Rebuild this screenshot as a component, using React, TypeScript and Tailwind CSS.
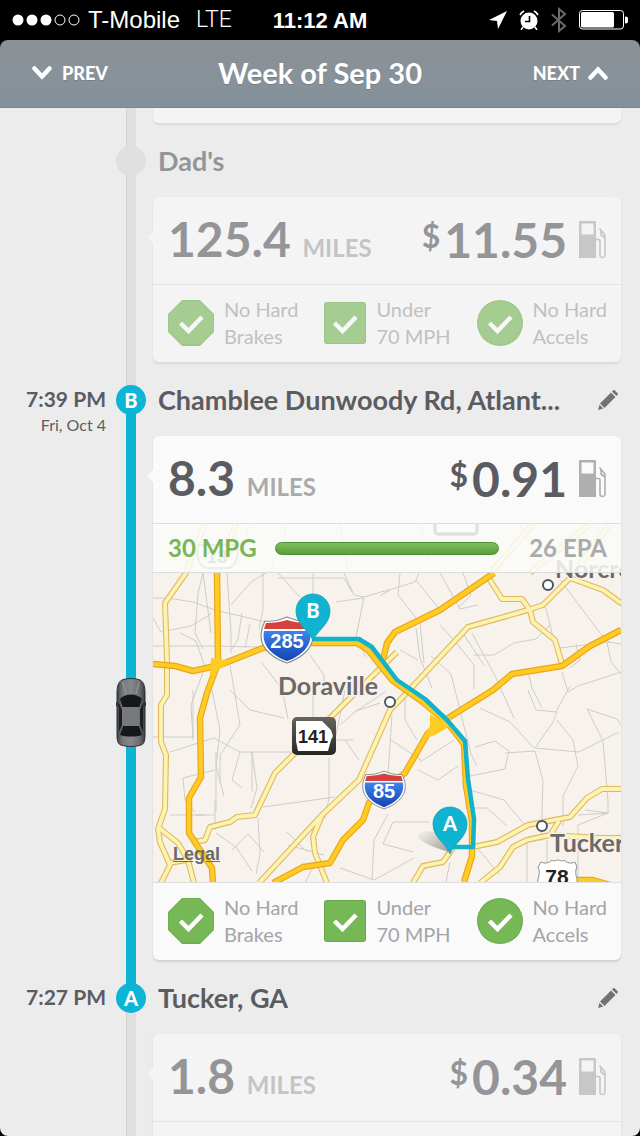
import React from 'react'

const inactive = 'bg-[#e0e0e0] border-l border-[#d2d2d2]'
const active = 'bg-[#0cb4d6]'

function StatusBar() {
  return (
    <div className="grid h-10 grid-cols-[1fr_auto_1fr] items-center bg-black px-3 font-['Liberation_Sans',sans-serif] text-[22px] text-white">
      <div className="flex items-center gap-2">
        <svg width="68" height="14" viewBox="0 0 68 14" aria-label="Signal">
          <g fill="#fff">
            <circle cx="6" cy="7" r="5.5" />
            <circle cx="20" cy="7" r="5.5" />
            <circle cx="34" cy="7" r="5.5" />
          </g>
          <g fill="none" stroke="#fff">
            <circle cx="48" cy="7" r="5" />
            <circle cx="62" cy="7" r="5" />
          </g>
        </svg>
        <span className="text-2xl">T-Mobile</span>
        <span className="ml-2 font-['Roboto',sans-serif] text-[23px] font-light">LTE</span>
      </div>
      <span className="font-bold">11:12 AM</span>
      <div className="flex items-center justify-end gap-3">
        <svg width="18" height="18" viewBox="0 0 18 18" fill="#fff">
          <path d="M18 0 0 9l8 1 1 8z" />
        </svg>
        <svg width="20" height="20" viewBox="0 0 20 20">
          <circle cx="10" cy="11" r="8.5" fill="#fff" />
          <path d="M1 5a10 10 0 0 1 4-4M19 5a10 10 0 0 0-4-4" stroke="#fff" strokeWidth="1.6" fill="none" />
          <path d="M10.500 6v5.500H6" stroke="#000" strokeWidth="1.600" fill="none" />
          <path d="m4 17-2 3M16 17l2 3" stroke="#fff" strokeWidth="1.500" />
        </svg>
        <svg width="16" height="26" viewBox="0 0 16 26" fill="none" stroke="#6b6b6b" strokeWidth="2">
          <path d="M1 7.500 14 19l-6 5V2l6 5L1 18.500" />
        </svg>
        <svg width="49" height="20" viewBox="0 0 49 20">
          <rect x="0.500" y="0.500" width="44" height="18.500" rx="3" fill="none" stroke="#fff" />
          <rect x="2" y="2" width="33" height="15.500" rx="1.500" fill="#fff" />
          <path d="M46 6.500a3.500 3.500 0 0 1 0 7z" fill="#fff" />
        </svg>
      </div>
    </div>
  )
}

function Header() {
  return (
    <header className="bg-black">
      <div className="grid h-[68px] grid-cols-[1fr_auto_1fr] items-center rounded-t-lg border-b border-[#7c858b] bg-linear-to-b from-[#8b9297] to-[#84919a] px-8 pb-0.5 text-white">
        <button className="flex items-center gap-2.5 justify-self-start text-lg font-black text-shadow-2xs">
          <svg width="20" height="14" viewBox="0 0 20 14" fill="none" stroke="#fff" strokeWidth="4.500" strokeLinecap="round" strokeLinejoin="miter">
            <path d="m2.500 2.500 7.500 8 7.500-8" />
          </svg>
          PREV
        </button>
        <h1 className="text-[29px] font-bold text-shadow-2xs">Week of Sep 30</h1>
        <button className="flex items-center gap-2 justify-self-end text-lg font-black text-shadow-2xs">
          NEXT
          <svg width="20" height="14" viewBox="0 0 20 14" fill="none" stroke="#fff" strokeWidth="4.500" strokeLinecap="round" strokeLinejoin="miter">
            <path d="m2.500 11.500 7.500-8 7.500 8" />
          </svg>
        </button>
      </div>
    </header>
  )
}

function PumpIcon() {
  return (
    <svg width="28" height="38" viewBox="0 0 28 38">
      <path fillRule="evenodd" fill="#aeafb1" d="M1 0h15a1 1 0 0 1 1 1v36H0V1a1 1 0 0 1 1-1zM2.500 2.500v11h12v-11z" />
      <path d="M17 18.500h2.500a1.500 1.500 0 0 1 1.500 1.500v14a2.500 2.500 0 0 0 5 0V14l-5.500-6.500M22 9v5l4 3" fill="none" stroke="#aeafb1" strokeWidth="1.600" />
    </svg>
  )
}

function PencilIcon() {
  return (
    <svg width="20" height="20" viewBox="0 0 20 20" fill="#717274">
      <path d="m14 1.500 1.200-1.200a1 1 0 0 1 1.400 0l3 3a1 1 0 0 1 0 1.400L18.500 6z" />
      <path d="m13 2.500 4.500 4.500L6.500 18 2 13.500z" />
      <path d="m1.500 14.700 3.800 3.800L0 20z" />
    </svg>
  )
}

type Shape = 'octagon' | 'square' | 'circle'

function Badge({ shape }: { shape: Shape }) {
  return (
    <svg width={shape === 'square' ? 42 : 46} height="46" viewBox={shape === 'square' ? '2 0 42 46' : '0 0 46 46'}>
      {shape === 'octagon' && <path d="M14 0h18l14 14v18L32 46H14L0 32V14z" fill="#6fb04c" />}
      {shape === 'octagon' && <path d="M14 1h18l13 13v17L32 44H14L1 31V14z" fill="#76b855" />}
      {shape === 'square' && <rect x="2" y="2" width="42" height="42" rx="3" fill="#6aa948" />}
      {shape === 'square' && <rect x="3" y="3" width="40" height="40" rx="2" fill="#76b855" />}
      {shape === 'circle' && <circle cx="23" cy="23" r="23" fill="#6aa948" />}
      {shape === 'circle' && <circle cx="23" cy="23" r="22" fill="#76b855" />}
      <path d="m12.500 23 8 8L34 17" fill="none" stroke="#fff" strokeWidth="4.500" />
    </svg>
  )
}

const checks: { shape: Shape; top: string; bottom: string }[] = [
  { shape: 'octagon', top: 'No Hard', bottom: 'Brakes' },
  { shape: 'square', top: 'Under', bottom: '70 MPH' },
  { shape: 'circle', top: 'No Hard', bottom: 'Accels' },
]

function Checks() {
  return (
    <ul className="flex h-[77px] items-center justify-between pr-3.5 pb-0.5 pl-[15px]">
      {checks.map((c) => (
        <li key={c.shape} className="flex items-center gap-2.5 text-xl leading-[27px] text-[#a3a4a7]">
          <Badge shape={c.shape} />
          <span>
            {c.top}
            <br />
            {c.bottom}
          </span>
        </li>
      ))}
    </ul>
  )
}

const streets = [
  'M153 598h15l25 4 22 8 34 8 20 5 14 9M153 646h60l45 1M203 573l-5 20-3 40 8 16M203 573l8 60M227 573l4 60v20M231 605l20-23 20-12 2-10M263 573v36l-4 20M278 578h66l8 14M278 573l20 22 18 14M313 573v20l-6 14M344 573l10 22 10 2 20-6M380 596l10-6M364 597l-8 40 10 20',
  'M336 602l27-4M153 618l8 14 30-6 20-12M180 633l16 8 9 26-14 38 2 33M242 613l-4 26-6 10M250 624l-5 24M262 663l20 26 6 30M310 655l14 20v20M230 665l10 60-20 30v28M212 690l8 40-4 36 8 30M153 737h40M193 690v50M170 752l44-14 26 14h38M252 752v40M216 752v60M278 752h35v-62M240 752l-8 28 10 8M230 690l20 20 34 8M252 752l5 36-6 20M263 807l72-10M329 758v40l-4 20M335 740h18M183 778l32-8M183 778l2 22 10 12M215 800v30M195 815h20M258 818l2 36-4 20M170 815h35',
  'M216 833l20 14 16 24M232 850l16-16 16 18M287 832l20 20M288 845l36 10M305 883l10-20M340 868l34 12 40-22M372 880l2-40 14-26M388 775l4-60M345 740l14 20M345 690l-10 50M355 712l30-20M340 725l16-14 24-8',
  'M382 592l33-10 4-9M400 573l-2 22 22 28 4 40M416 580l24 30M440 573l20 36 18-4M463 573l8 22-12 12M416 628l4 30 12 30M400 650l18 10M431 656l20 18 20 80 6 12M440 625l18 20 16 20v24M472 633l24 45 18 40M464 635l20 30M474 655h20l20-12 22-4 14-14M545 605l10 40M555 573l45 60 10 10M560 648l48-6 13 2M570 668l10-8-4-16M607 642l4 20 10 12M528 672l4 16 10 20M562 672l6 20 10-6 43-14',
  'M480 708l30 14 24 26M528 690l8 20 20 2 14-26M557 712l-4 10-18 26M557 720l16 20 5 26-15 30v30M587 709l30 10 4 6M587 709l16 32 5 60v12M535 748l44 4 40-20M505 753l30-2 8 30-2 60M475 747l20-6 14 10-4 18-40 8M420 762l34-22M418 770l20 10 20-14M421 760l-30-20M405 690v30l12 20M470 790l34 10 20 24M465 808h22l20 18M393 822h36M393 822l-10 22 30 8M527 840v43M479 850l20 24M450 862l-4 20M578 815l30-2-30 12v58M547 840v43M585 810l24 3',
  'M285 524v40M340 524l8 48M420 524l10 40M520 524l20 40M600 524l-20 40M250 524l-12 40',
]

const lightRoads = [
  'M205 524l-19 49-21 30 2 57v35l-6 10v37l5 13-1 54-7 20 2 13 10 23-10 20',
  'M158 827l20 16 10 17 6 23M170 863l16-3',
  'M397 652l-44 43-78 78-20 42-18 2-7 5-20 5-5 13-10 2',
  'M640 612l-19-9-18-13-33-12-27 27-15 5-60 17-68 73-10 10-31 70-37 35-63 68',
  'M322 815l-9 22 2 16 12 30',
  'M488 577l14 22h20l8 11 3 12 22 18 7 24',
  'M473 847l24-5 31-17 42-8 17-19 15-9h19',
  'M480 883l20-16 13-20 14-7 23-5 9-14M550 835l50 3h21',
  'M413 883l10-17 20-4 10-14',
  'M493 570l40-46M530 573l60-49M570 578l40-54M236 524l-19 49',
]

const highways = [
  'M217 573l1 90-11 30-7 25 1 59-12 21v35l11 17 12 18 1 15',
  'M153 664l22 2 18 5 27-6 43-17 24-5h70l11 7 24 30 28 20 27 22 17 22 2 42 6 36v34l-8 26',
  'M273 883l30-16 27-4 13-23 20-20 6-17 14-13 22-17 23-40 20-15 45-28 19-16 50-8 28-20 31-16',
  'M383 660l4-17 8-11 45-22 54-37',
  'M577 880h16l17 5',
]

function Shield({ x, y, scale, label }: { x: number; y: number; scale: number; label: string }) {
  return (
    <g transform={`translate(${x} ${y})`}>
      <g transform={`scale(${scale})`}>
        <path d="M-22-19c8 1 15-1 22-4 7 3 14 5 22 4 3 6 4 10 4 15C26 10 12 19 0 23c-12-4-26-13-26-27 0-5 1-9 4-15z" fill="#fff" stroke="#8d8d90" strokeWidth="1.200" />
        <path d="M-21-17c8 0 15-1 21-3 6 2 13 3 21 3l2 6h-46z" fill="#d5403c" />
        <path d="M-23-9h46c3 15-9 25-23 30-14-5-26-15-23-30z" fill="url(#shieldBlue)" />
      </g>
      <text y="8" textAnchor="middle" fill="#fff" fontFamily="Liberation Sans, sans-serif" fontWeight="700" fontSize="20">{label}</text>
    </g>
  )
}

function Pin({ x, y, label }: { x: number; y: number; label: string }) {
  return (
    <g transform={`translate(${x} ${y})`}>
      <path d="M0 30C-3 20-17 14-17 0a17 17 0 0 1 34 0c0 14-14 20-17 30z" fill="#10b4d0" stroke="#0ca3bd" strokeWidth="0.800" />
      <text y="7" textAnchor="middle" fill="#fff" fontFamily="Lato, sans-serif" fontWeight="900" fontSize="20">{label}</text>
    </g>
  )
}

function RouteMap() {
  return (
    <div className="relative border-b border-[#dfdfe0]">
      <svg viewBox="153 524 468 358" preserveAspectRatio="xMidYMid slice" className="block h-[358px] w-full bg-[#f7f3ec]">
        <defs>
          <linearGradient id="shieldBlue" x1="0" y1="0" x2="0" y2="1">
            <stop offset="0" stopColor="#3f83ea" />
            <stop offset="1" stopColor="#1243b0" />
          </linearGradient>
          <linearGradient id="plate" x1="0" y1="0" x2="0" y2="1">
            <stop offset="0" stopColor="#66665f" />
            <stop offset="1" stopColor="#262622" />
          </linearGradient>
          <linearGradient id="pinShadow" x1="0" y1="0" x2="1" y2="1">
            <stop offset="0" stopColor="#000" stopOpacity="0" />
            <stop offset="1" stopColor="#000" stopOpacity="0.350" />
          </linearGradient>
        </defs>
        <g fill="none" stroke="#cfccc8" strokeWidth="1">
          {streets.map((d) => <path key={d} d={d} />)}
        </g>
        <g fill="none" strokeLinejoin="round">
          <g stroke="#dfb962" strokeWidth="6">
            {lightRoads.map((d) => <path key={d} d={d} />)}
          </g>
          <g stroke="#fdf3b0" strokeWidth="3.800">
            {lightRoads.map((d) => <path key={d} d={d} />)}
          </g>
          <g stroke="#eba51c" strokeWidth="6.500">
            {highways.map((d) => <path key={d} d={d} />)}
          </g>
          <g stroke="#fdcb22" strokeWidth="4.200">
            {highways.map((d) => <path key={d} d={d} />)}
          </g>
          <path d="M422 740l8-14v-12l10 6 12-3-5 11-12 7z" fill="#fdcb22" />
          <path d="M211 658l14 2 3 4-10 6-8 6z" fill="#fdcb22" />
          <path d="M313 639h46l13 8 25 33 28 19 22 21 18 21 3 38 6 40-1 28h-23" stroke="#12b2cb" strokeWidth="4.500" />
        </g>

        <g fill="#fff" stroke="#4a5568" strokeWidth="2">
          <circle cx="390" cy="702" r="5" />
          <circle cx="548" cy="585" r="5" />
          <circle cx="542" cy="826" r="5" />
        </g>
        <g fontFamily="Lato, sans-serif" fontWeight="700" fontSize="25" fill="#6c6a69" stroke="#f7f3ec" strokeWidth="3" paintOrder="stroke">
          <text x="278" y="695">Doraville</text>
          <text x="555" y="578">Norcross</text>
          <text x="550" y="852">Tucker</text>
        </g>

        <Shield x={287} y={640} scale={1} label="285" />
        <Shield x={384} y={790} scale={0.82} label="85" />

        <g>
          <rect x="292" y="717" width="44" height="38" rx="5" fill="url(#plate)" />
          <path d="M296 721h26l9 9 2 6-2 4-3 11h-30l-2-10z" fill="#fff" />
          <text x="313" y="743" textAnchor="middle" fontFamily="Liberation Sans, sans-serif" fontWeight="700" fontSize="18" fill="#222">141</text>
        </g>
        <g>
          <path d="M541 862c4 2 8 1 11-2 2 2 4 0 6 0s4 2 6 0c3 3 7 4 11 2l2 5c-4 8 3 12-1 22h-37c-4-10 3-14-1-22z" fill="#fff" stroke="#8d8d90" />
          <text x="557" y="884" textAnchor="middle" fontFamily="Liberation Sans, sans-serif" fontWeight="700" fontSize="21" fill="#222">78</text>
        </g>
        <g fill="#fff" stroke="#9c9ca0" strokeWidth="2">
          <path d="M199 545c-4 8 0 22 8 23h21c8-1 12-15 8-23z" />
          <path d="M435 515v16a3 3 0 0 0 3 3h36a3 3 0 0 0 3-3v-16z" stroke="#55555a" strokeWidth="3.500" />
          <text x="217" y="563" textAnchor="middle" fontFamily="Liberation Sans, sans-serif" fontWeight="700" fontSize="19" fill="#77777a" stroke="none">13</text>
        </g>

        <path d="M449 852c-14-4-32-11-31-17 2-6 18-5 24 2z" fill="url(#pinShadow)" />
        <Pin x={313} y={611} label="B" />
        <Pin x={450} y={824} label="A" />
      </svg>

      <div className="absolute inset-x-0 top-0 flex h-[49px] items-center border-b border-[#dcdcdc] bg-[#fafaf9]/85 pr-3.5 pl-[15px] text-2xl font-bold">
        <span className="text-[#78b655]">30 MPG</span>
        <div role="img" aria-label="30 of 26 miles per gallon" className="mr-[30px] ml-[18px] h-[13px] flex-1 rounded-full border border-[#4f8f33] bg-linear-to-b from-[#7cc05a] to-[#5c9d3c]" />
        <span className="text-[#a9aaac]">26 EPA</span>
      </div>
      <a href="#legal" className="absolute bottom-3.5 left-5 font-['Liberation_Sans',sans-serif] text-lg font-bold text-[#6c6a69] underline">
        Legal
      </a>
    </div>
  )
}

function TripCard({ miles, cost, faded, children }: { miles: string; cost: string; faded?: boolean; children?: React.ReactNode }) {
  return (
    <article className={`relative rounded-md bg-[#fafafb] shadow-[0_2px_2px_#0000001f] ${faded ? 'opacity-60' : ''}`}>
      <div className="absolute top-[35px] -left-1 size-2.5 rotate-45 bg-[#fafafb]" />
      <div className="relative flex h-[88px] items-center justify-between border-b border-[#dfdfe0] pr-3.5 pb-0.5 pl-[15px] text-[#5b5c61]">
        <p className="text-5xl font-bold">
          {miles} <span className="text-2xl text-[#a9aaac]">MILES</span>
        </p>
        <div className="flex items-center gap-3">
          <p className="flex items-start text-5xl font-bold">
            <span className="mr-1 text-[32px] leading-10">$</span>
            {cost}
          </p>
          <PumpIcon />
        </div>
      </div>
      {children}
      <Checks />
    </article>
  )
}

function Car() {
  return (
    <svg width="32" height="70" viewBox="0 0 32 70" className="absolute top-[316px] left-1/2 -translate-x-1/2">
      <defs>
        <linearGradient id="body" x1="0" y1="0" x2="1" y2="0">
          <stop offset="0" stopColor="#3d4043" />
          <stop offset="0.200" stopColor="#777a7d" />
          <stop offset="0.500" stopColor="#85888b" />
          <stop offset="0.800" stopColor="#6c6f72" />
          <stop offset="1" stopColor="#37393c" />
        </linearGradient>
      </defs>
      <path d="M7 2c5-2 13-2 18 0 4 2 5 7 5 13v42c0 6-1 9-4 10-6 2-14 2-20 0-3-1-4-4-4-10V15C2 9 3 4 7 2z" fill="url(#body)" stroke="#2f3134" />
      <path d="M1 24v4l3 1v-4zM31 24v4l-3 1v-4z" fill="#333" />
      <path d="M5 21c5-6 17-6 22 0l-3 9H8z" fill="#17181a" />
      <path d="M4 25l3 7v15l-3 7zM28 25l-3 7v15l3 7z" fill="#1d1e20" />
      <path d="M8 48h16l3 9c-6 2-16 2-22 0z" fill="#17181a" />
      <rect x="7.500" y="29" width="17" height="19" rx="1" fill="#77797c" />
      <path d="M8 4l3 12M24 4l-3 12" stroke="#a0a3a5" strokeWidth="0.800" />
      <path d="M4 64h5M23 64h5" stroke="#8a5a5a" />
    </svg>
  )
}

interface StopProps {
  place: string
  time?: string
  date?: string
  marker?: string
  above: string
  below: string
  faded?: boolean
  car?: boolean
  children: React.ReactNode
}

function Stop({ place, time, date, marker, above, below, faded, car, children }: StopProps) {
  return (
    <li className="grid grid-cols-[109px_44px_minmax(0,1fr)] pr-[19px]">
      <div className="pt-[23px] pr-[3px] text-right text-[#5b5c61]">
        <p className="text-[21px] leading-7 font-bold">{time}</p>
        <p className="text-base leading-6">{date}</p>
      </div>
      <div className="relative flex flex-col items-center">
        <div className={`h-[38px] w-2.5 ${above}`} />
        <div className={`w-2.5 flex-1 ${below}`} />
        <span
          className={`absolute top-[23px] flex size-[30px] items-center justify-center rounded-full text-xl font-black ${
            marker ? 'bg-[#0cb4d6] text-white' : 'bg-[#e0e0e0]'
          }`}
        >
          {marker}
        </span>
        {car && <Car />}
      </div>
      <div>
        <div className="flex h-[74px] items-center justify-between pt-0.5 pl-[5px]">
          <h2 className={`truncate text-[27px] font-bold text-[#5b5c61] ${faded ? 'opacity-60' : ''}`}>{place}</h2>
          {marker && (
            <button aria-label={`Edit ${place}`} className="ml-5 shrink-0 pr-[3px]">
              <PencilIcon />
            </button>
          )}
        </div>
        {children}
      </div>
    </li>
  )
}

export default function App() {
  return (
    <div className="h-screen bg-black font-['Lato',sans-serif]">
      <div className="flex h-full flex-col overflow-hidden rounded-b-lg bg-[#ececec]">
        <StatusBar />
        <Header />
        <main className="min-h-0 flex-1 overflow-hidden">
          {/* tail of the previous trip, scrolled under the header */}
          <div className="grid h-[15px] grid-cols-[109px_44px_minmax(0,1fr)] pr-[19px]">
            <div className={`col-start-2 w-2.5 justify-self-center ${inactive}`} />
            <div className="rounded-b-md bg-[#fafafb] opacity-60 shadow-[0_2px_2px_#0000001f]" />
          </div>
          <ol>
            <Stop place="Dad's" above={inactive} below={inactive} faded>
              <TripCard miles="125.4" cost="11.55" faded />
            </Stop>
            <Stop place="Chamblee Dunwoody Rd, Atlant..." time="7:39 PM" date="Fri, Oct 4" marker="B" above={inactive} below={active} car>
              <TripCard miles="8.3" cost="0.91">
                <RouteMap />
              </TripCard>
            </Stop>
            <Stop place="Tucker, GA" time="7:27 PM" marker="A" above={active} below={inactive}>
              <TripCard miles="1.8" cost="0.34" faded />
            </Stop>
          </ol>
        </main>
      </div>
    </div>
  )
}
